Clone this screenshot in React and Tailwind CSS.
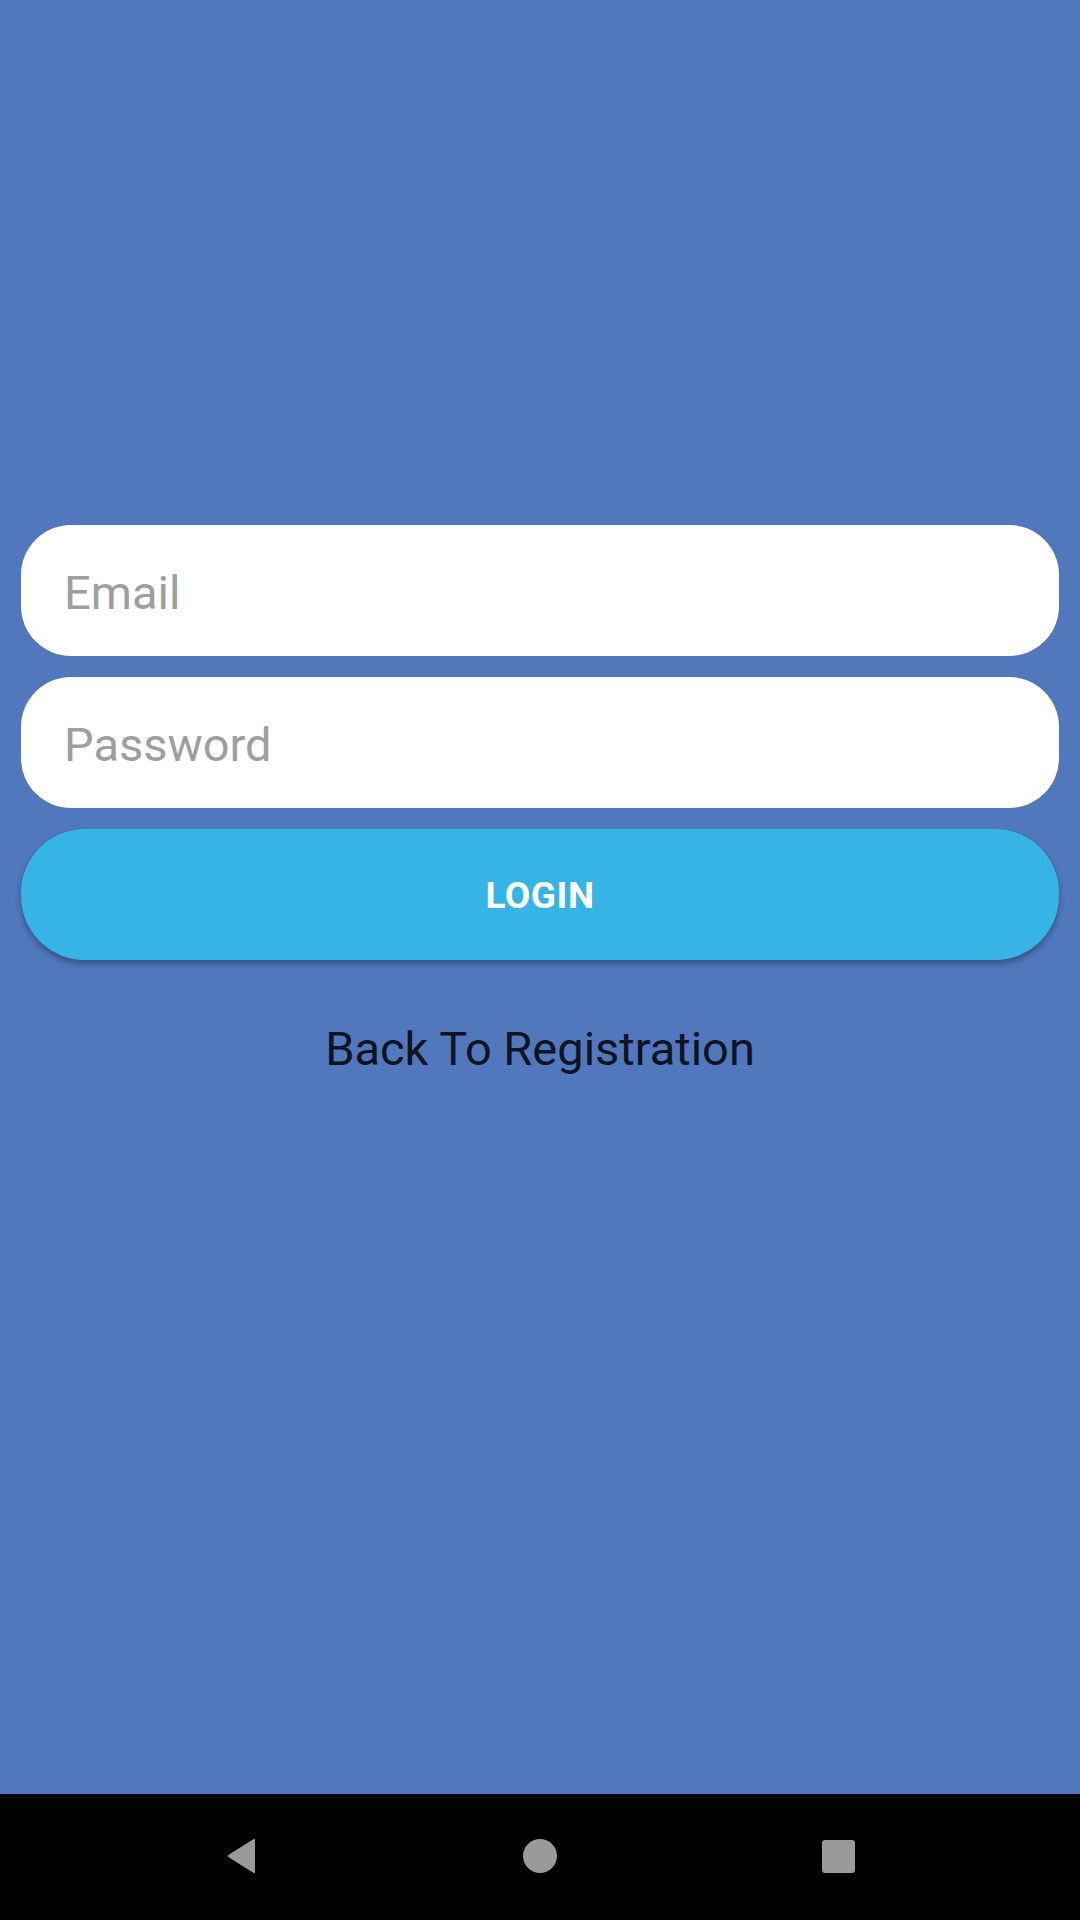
export default function App() {
  return (
    <div className="w-[1080px] h-[1920px] flex flex-col bg-[#5177bd] font-['Roboto',sans-serif]">
      <div className="flex-1 flex flex-col px-[21px] pt-[525px]">
        <div className="h-[131px] rounded-[50px] bg-white flex items-center pl-[43px] pt-[5px]">
          <span className="text-[47px] text-[#9e9e9e]">Email</span>
        </div>
        <div className="h-[131px] mt-[21px] rounded-[50px] bg-white flex items-center pl-[43px] pt-[5px]">
          <span className="text-[47px] text-[#9e9e9e]">Password</span>
        </div>
        <button className="h-[131px] mt-[21px] rounded-[64px] bg-[#35b4e5] shadow-[0_4px_6px_rgba(0,0,0,0.3)] flex items-center justify-center pt-[2px]">
          <span className="text-[37px] font-bold text-white tracking-[0.5px]">LOGIN</span>
        </button>
        <div className="mt-[54px] text-center text-[47px] text-[#0f1420]">
          Back To Registration
        </div>
      </div>
      <div className="h-[126px] bg-black flex items-center justify-center">
        <div className="flex items-center gap-[265px] -mt-[2px]">
          <svg width="32" height="36" viewBox="0 0 32 36">
            <path d="M29 2 L29 34 Q29 36 27 34.5 L3 19.5 Q1 18 3 16.5 L27 1.5 Q29 0 29 2 Z" fill="#9a9a9a" />
          </svg>
          <div className="w-[34px] h-[34px] rounded-full bg-[#9a9a9a]" />
          <div className="w-[33px] h-[33px] rounded-[3px] bg-[#9a9a9a]" />
        </div>
      </div>
    </div>
  );
}
